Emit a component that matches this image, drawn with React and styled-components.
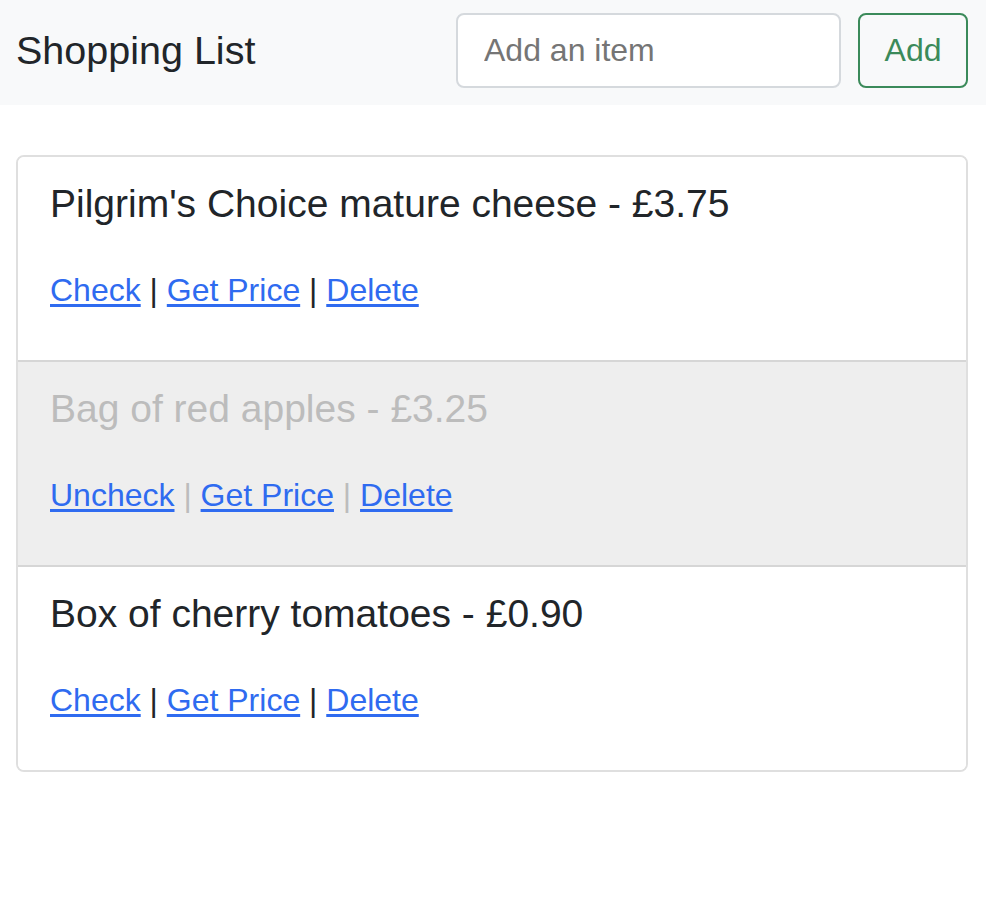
import styled, { createGlobalStyle } from "styled-components"
import { useState } from "react"

const Global = createGlobalStyle`
  body {
    margin: 0;
    background: #fff;
    font-family: "Liberation Sans", Arial, sans-serif;
    color: #212529;
  }
`

const Header = styled.header`
  display: flex;
  align-items: center;
  justify-content: space-between;
  height: 105px;
  box-sizing: border-box;
  padding: 0 18px 5px 16px;
  background: #f8f9fa;
`

const Brand = styled.div`
  font-size: 39.5px;
  line-height: 48px;
  color: #212529;
`

const Form = styled.form`
  display: flex;
  gap: 17px;
`

const Input = styled.input`
  width: 385px;
  height: 75px;
  box-sizing: border-box;
  padding: 0 26px;
  border: 2px solid #d5d9dd;
  border-radius: 8px;
  font-family: inherit;
  font-size: 32px;
  color: #212529;
  background: #fff;
  outline: none;

  ::placeholder {
    color: #6c757d;
  }
`

const AddButton = styled.button`
  width: 110px;
  height: 75px;
  border: 2px solid #3b8a5a;
  border-radius: 8px;
  background: transparent;
  color: #3b8a5a;
  font-family: inherit;
  font-size: 32px;
  cursor: pointer;
`

const Card = styled.ul`
  list-style: none;
  margin: 50px 18px 0 16px;
  padding: 0;
  border: 2px solid #dfdfdf;
  border-radius: 8px;
  overflow: hidden;
`

const Item = styled.li`
  padding: 23px 32px 46px;
  background: ${p => (p.checked ? "#eeeeee" : "#fff")};
  border-top: ${p => (p.first ? "none" : "2px solid #d6d6d6")};
`

const Title = styled.div`
  font-size: 39px;
  line-height: 48px;
  margin-bottom: 38px;
  color: ${p => (p.checked ? "#bcbcbc" : "#212529")};
`

const Actions = styled.div`
  font-size: 32px;
  line-height: 48px;
  color: ${p => (p.checked ? "#bcbcbc" : "#212529")};
`

const Link = styled.a`
  color: #2f6bf0;
  text-decoration: underline;
  text-underline-offset: 3px;
  cursor: pointer;
`

const items = [
  { name: "Pilgrim's Choice mature cheese", price: "3.75", checked: false },
  { name: "Bag of red apples", price: "3.25", checked: true },
  { name: "Box of cherry tomatoes", price: "0.90", checked: false },
]

export default function App() {
  const [list] = useState(items)

  return (
    <>
      <Global />
      <Header>
        <Brand>Shopping List</Brand>
        <Form onSubmit={e => e.preventDefault()}>
          <Input placeholder="Add an item" />
          <AddButton type="submit">Add</AddButton>
        </Form>
      </Header>
      <Card>
        {list.map((item, i) => (
          <Item key={item.name} checked={item.checked} first={i === 0}>
            <Title checked={item.checked}>
              {item.name} - £{item.price}
            </Title>
            <Actions checked={item.checked}>
              <Link>{item.checked ? "Uncheck" : "Check"}</Link> | <Link>Get Price</Link> | <Link>Delete</Link>
            </Actions>
          </Item>
        ))}
      </Card>
    </>
  )
}
